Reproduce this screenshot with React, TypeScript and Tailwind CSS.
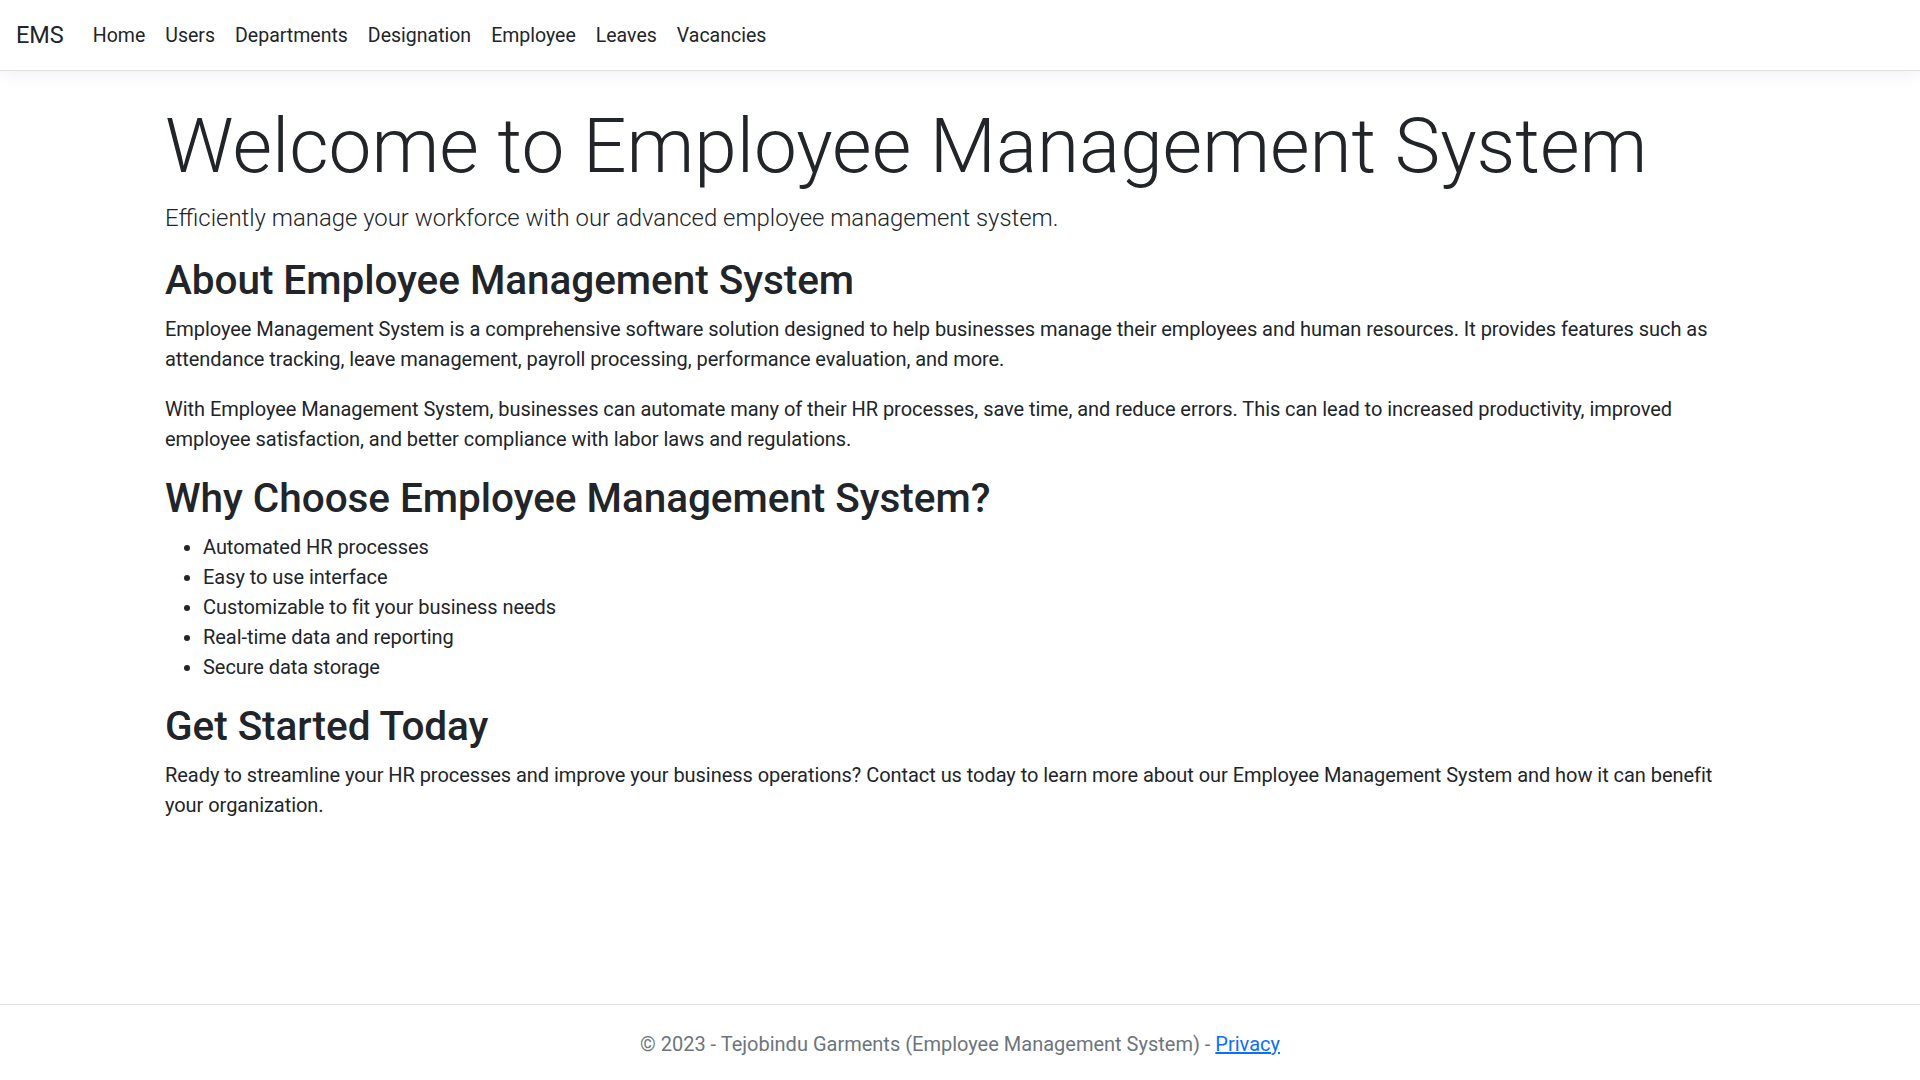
const FONT = { fontFamily: "Roboto, 'Liberation Sans', sans-serif" };

const navLinks = ["Home", "Users", "Departments", "Designation", "Employee", "Leaves", "Vacancies"];

const features = [
  "Automated HR processes",
  "Easy to use interface",
  "Customizable to fit your business needs",
  "Real-time data and reporting",
  "Secure data storage",
];

function Navbar() {
  return (
    <header className="h-[71px] border-b border-[#dee2e6] bg-white shadow-[0_5px_15px_rgba(0,0,0,0.05)]">
      <nav className="flex h-[70px] items-center pl-[16px] pt-[2px]">
        <a href="#" className="mr-[19px] text-[23.5px] leading-none text-[#212529]">
          EMS
        </a>
        <ul className="flex items-center">
          {navLinks.map((link) => (
            <li key={link}>
              <a href="#" className="block px-[10px] text-[19.5px] leading-[30px] text-[#212529]">
                {link}
              </a>
            </li>
          ))}
        </ul>
      </nav>
    </header>
  );
}

function SectionTitle({ children }: { children: string }) {
  return <h2 className="mb-[10px] text-[40.5px] font-medium leading-[48px] text-[#212529]">{children}</h2>;
}

export default function App() {
  return (
    <div className="flex min-h-screen flex-col bg-white text-[#212529]" style={FONT}>
      <Navbar />

      <main className="mx-auto w-[1590px] pt-[29px] text-[20px] leading-[30px] tracking-[-0.05px]">
        <h1 className="mb-[8px] text-[76.5px] font-light leading-[92px] tracking-normal">
          Welcome to Employee Management System
        </h1>
        <p className="mb-[20px] text-[23.9px] font-light leading-[36px] tracking-normal">
          Efficiently manage your workforce with our advanced employee management system.
        </p>

        <SectionTitle>About Employee Management System</SectionTitle>
        <p className="mb-[20px]">
          Employee Management System is a comprehensive software solution designed to help businesses manage their
          employees and human resources. It provides features such as attendance tracking, leave management, payroll
          processing, performance evaluation, and more.
        </p>
        <p className="mb-[20px]">
          With Employee Management System, businesses can automate many of their HR processes, save time, and reduce
          errors. This can lead to increased productivity, improved employee satisfaction, and better compliance with
          labor laws and regulations.
        </p>

        <SectionTitle>Why Choose Employee Management System?</SectionTitle>
        <ul className="mb-[20px] list-disc pl-[38px]">
          {features.map((f) => (
            <li key={f}>{f}</li>
          ))}
        </ul>

        <SectionTitle>Get Started Today</SectionTitle>
        <p className="mb-[20px]">
          Ready to streamline your HR processes and improve your business operations? Contact us today to learn more
          about our Employee Management System and how it can benefit your organization.
        </p>
      </main>

      <footer className="mt-auto h-[76px] border-t border-[#dee2e6] pt-[2px] text-center text-[20px] leading-[74px] text-[#6c757d]">
        © 2023 - Tejobindu Garments (Employee Management System) -{" "}
        <a href="#" className="text-[#0d6efd] underline">
          Privacy
        </a>
      </footer>
    </div>
  );
}
